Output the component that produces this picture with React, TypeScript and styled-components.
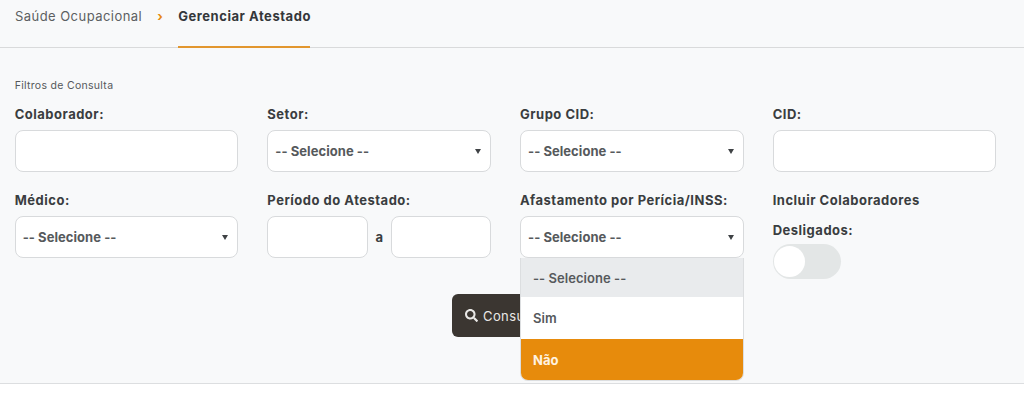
import styled, { createGlobalStyle } from "styled-components";
import { FaSearch } from "react-icons/fa";

const GlobalStyle = createGlobalStyle`
  html, body {
    margin: 0;
    padding: 0;
    background: #ffffff;
    font-family: "Inter", "Noto Sans", sans-serif;
  }
`;

const Page = styled.div`
  width: 1024px;
  height: 404px;
  display: flex;
  flex-direction: column;
  overflow: hidden;
`;

const Content = styled.div`
  height: 384px;
  background: #f8f9fa;
  border-bottom: 1px solid #dcdee0;
  box-sizing: border-box;
  flex: none;
`;

const Breadcrumb = styled.div`
  height: 48px;
  box-sizing: border-box;
  padding-left: 15px;
  display: flex;
  align-items: flex-start;
  border-bottom: 1px solid #d9dadb;
`;

const Crumb = styled.span`
  font-size: 13px;
  line-height: 16px;
  letter-spacing: 0.45px;
  padding-top: 8px;
  color: #5c5f62;
`;

const Chevron = styled.span`
  width: 36px;
  padding-top: 8px;
  display: flex;
  justify-content: center;
  color: #e78b10;
  font-size: 13px;
  line-height: 16px;
  font-weight: 700;
`;

const ActiveCrumb = styled.span`
  font-size: 13px;
  font-weight: 700;
  letter-spacing: 0.55px;
  line-height: 16px;
  padding-top: 8px;
  width: 132px;
  height: 48px;
  box-sizing: border-box;
  color: #34373a;
  border-bottom: 2px solid #e2962e;
  white-space: nowrap;
`;

const Form = styled.div`
  padding: 31px 28px 0 14.7px;
`;

const Legend = styled.div`
  font-size: 10.5px;
  line-height: 14px;
  letter-spacing: 0.3px;
  color: #55585b;
  margin-bottom: 13px;
`;

const Grid = styled.div`
  display: grid;
  grid-template-columns: repeat(4, 223.67px);
  column-gap: 29px;
  row-gap: 20px;
`;

const Field = styled.div`
  position: relative;
  min-width: 0;
`;

const Label = styled.div<{ $gap?: number }>`
  font-size: 13px;
  font-weight: 700;
  letter-spacing: 0.5px;
  line-height: 16px;
  height: 16px;
  margin-bottom: ${({ $gap }) => $gap ?? 8}px;
  color: #3a3d40;
  white-space: nowrap;
`;

const Input = styled.div`
  height: 42px;
  flex: 1;
  box-sizing: border-box;
  background: #ffffff;
  border: 1px solid #d8dadc;
  border-radius: 8px;
`;

const Select = styled(Input)`
  display: flex;
  align-items: center;
  justify-content: space-between;
  padding: 0 9px 0 7px;
  font-size: 13px;
  font-weight: 700;
  letter-spacing: 0.05px;
  color: #56595c;
`;

const Caret = styled.span`
  width: 0;
  height: 0;
  border-left: 3.5px solid transparent;
  border-right: 3.5px solid transparent;
  border-top: 5px solid #3f4245;
`;

const Range = styled.div`
  display: flex;
  align-items: center;
`;

const RangeSep = styled.span`
  width: 23px;
  text-align: center;
  font-size: 13px;
  font-weight: 700;
  color: #3a3d40;
`;

const Toggle = styled.div`
  width: 68px;
  height: 35px;
  border-radius: 18px;
  background: #e3e6e6;
  display: flex;
  align-items: center;
  padding-left: 1px;
  box-sizing: border-box;
`;

const Knob = styled.span`
  width: 31px;
  height: 31px;
  border-radius: 50%;
  background: #ffffff;
`;

const Actions = styled.div`
  display: flex;
  padding-left: 437.3px;
  margin-top: 15px;
`;

const Button = styled.button`
  width: 107px;
  height: 43px;
  border: none;
  border-radius: 6px;
  background: #3b3631;
  color: #e9e8e6;
  font-family: inherit;
  font-size: 13px;
  letter-spacing: 0.4px;
  display: flex;
  align-items: center;
  gap: 5px;
  padding: 0 0 0 13px;
  white-space: nowrap;
`;

const Menu = styled.div`
  position: absolute;
  top: 66px;
  left: 0;
  right: 0;
  z-index: 5;
  background: #ffffff;
  border-radius: 0 0 8px 8px;
  border: 1px solid #dcdee0;
  border-top: none;
  overflow: hidden;
  box-sizing: border-box;
`;

const Option = styled.div<{ $state?: "muted" | "active" }>`
  height: ${({ $state }) => ($state === "muted" ? "39px" : $state === "active" ? "41px" : "42px")};
  display: flex;
  align-items: center;
  padding-left: 12px;
  font-size: 13px;
  letter-spacing: 0.05px;
  font-weight: ${({ $state }) => ($state === "active" ? 700 : 600)};
  color: ${({ $state }) => ($state === "active" ? "#fff3e2" : "#56595c")};
  background: ${({ $state }) =>
    $state === "muted" ? "#e9ebed" : $state === "active" ? "#e78b0c" : "#ffffff"};
`;

const App = () => {
  return (
    <>
      <GlobalStyle />
      <Page>
        <Content>
          <Breadcrumb>
            <Crumb>Saúde Ocupacional</Crumb>
            <Chevron>›</Chevron>
            <ActiveCrumb>Gerenciar Atestado</ActiveCrumb>
          </Breadcrumb>
          <Form>
            <Legend>Filtros de Consulta</Legend>
            <Grid>
              <Field>
                <Label>Colaborador:</Label>
                <Input />
              </Field>
              <Field>
                <Label>Setor:</Label>
                <Select>
                  -- Selecione --
                  <Caret />
                </Select>
              </Field>
              <Field>
                <Label>Grupo CID:</Label>
                <Select>
                  -- Selecione --
                  <Caret />
                </Select>
              </Field>
              <Field>
                <Label>CID:</Label>
                <Input />
              </Field>
              <Field>
                <Label>Médico:</Label>
                <Select>
                  -- Selecione --
                  <Caret />
                </Select>
              </Field>
              <Field>
                <Label>Período do Atestado:</Label>
                <Range>
                  <Input />
                  <RangeSep>a</RangeSep>
                  <Input />
                </Range>
              </Field>
              <Field>
                <Label>Afastamento por Perícia/INSS:</Label>
                <Select>
                  -- Selecione --
                  <Caret />
                </Select>
                <Menu>
                  <Option $state="muted">-- Selecione --</Option>
                  <Option>Sim</Option>
                  <Option $state="active">Não</Option>
                </Menu>
              </Field>
              <Field>
                <Label $gap={14}>Incluir Colaboradores</Label>
                <Label $gap={6}>Desligados:</Label>
                <Toggle>
                  <Knob />
                </Toggle>
              </Field>
            </Grid>
            <Actions>
              <Button>
                <FaSearch size={13} />
                Consultar
              </Button>
            </Actions>
          </Form>
        </Content>
      </Page>
    </>
  );
};

export default App;
